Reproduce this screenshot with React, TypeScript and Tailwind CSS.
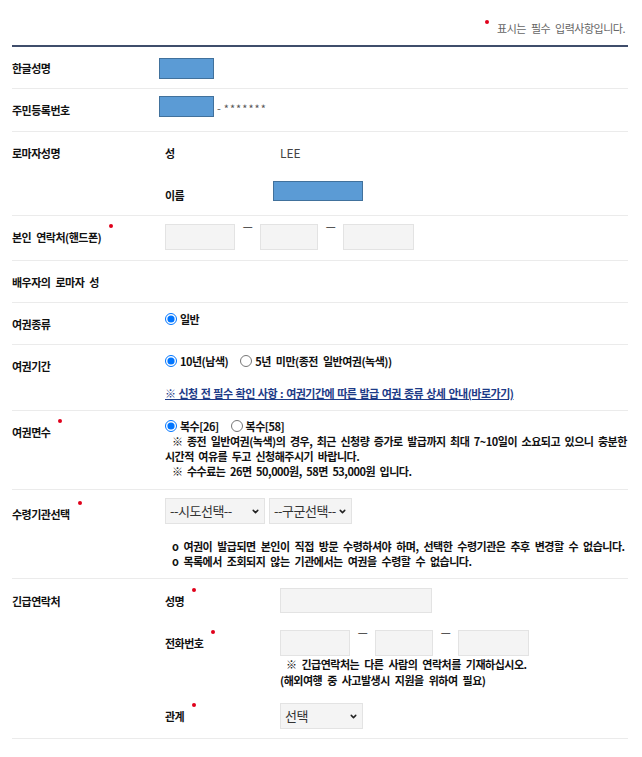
import { ChevronDown } from "lucide-react";
import type { ReactNode } from "react";

// small red "required" marker
function Dot({ className = "" }: { className?: string }) {
	return (
		<span
			className={`inline-block w-[4px] h-[4px] rounded-full bg-[#e0001b] align-top relative ${className}`}
		/>
	);
}

function Label({
	children,
	required,
	className = "pt-[13px]",
}: {
	children: ReactNode;
	required?: boolean;
	className?: string;
}) {
	return (
		<div className={`w-[153px] shrink-0 leading-[16px] font-bold ${className}`}>
			{children}
			{required && <Dot className="ml-[8px] -top-[5px]" />}
		</div>
	);
}

function Box({ className }: { className: string }) {
	return <div className={`bg-[#f4f4f4] border border-[#e3e3e3] ${className}`} />;
}

function Dash() {
	return (
		<span className="w-[25px] shrink-0 text-center leading-[4px] text-[#555] font-bold">—</span>
	);
}

function Select({ className, text }: { className: string; text: string }) {
	return (
		<div className={`relative shrink-0 ${className}`}>
			<select className="appearance-none w-full h-[26px] bg-[#f4f4f4] border border-[#e3e3e3] pl-[4px] text-[13px] font-normal text-[#333] outline-none">
				<option>{text}</option>
			</select>
			<ChevronDown
				className="absolute right-[5px] top-[9px] pointer-events-none text-[#222]"
				size={9}
				strokeWidth={4}
			/>
		</div>
	);
}

function Radio({
	name,
	label,
	checked,
	className = "",
}: {
	name: string;
	label: string;
	checked?: boolean;
	className?: string;
}) {
	return (
		<label className={`flex items-center h-[14px] font-bold leading-[14px] ${className}`}>
			<input
				type="radio"
				name={name}
				defaultChecked={checked}
				className="m-0 w-[12px] h-[12px]"
			/>
			<span className="ml-[3px]">{label}</span>
		</label>
	);
}

const redacted = "bg-[#5b9bd5] border border-[#41719c]";

export default function App() {
	return (
		<div className="w-[642px] min-h-[757px] bg-white font-['Noto_Sans_CJK_KR','Noto_Sans',sans-serif] text-[11px] tracking-[-0.5px] [word-spacing:3px] text-[#111]">
			<div className="ml-[12px] w-[616px]">
				{/* header note */}
				<div className="h-[45px] flex justify-end items-start pt-[20px] pr-[3px] leading-[16px] text-[#666]">
					<Dot className="mr-[8px] top-0" />
					<span>표시는 필수 입력사항입니다.</span>
				</div>
				<div className="border-t-2 border-[#3f4d6b]" />

				{/* 한글성명 */}
				<div className="flex h-[42px] border-b border-[#ebebeb]">
					<Label>한글성명</Label>
					<div className="pt-[11px] -ml-[6px]">
						<div className={`w-[55px] h-[21px] ${redacted}`} />
					</div>
				</div>

				{/* 주민등록번호 */}
				<div className="flex h-[43px] border-b border-[#ebebeb]">
					<Label>주민등록번호</Label>
					<div className="pt-[7px] -ml-[6px] flex items-start">
						<div className={`w-[55px] h-[21px] ${redacted}`} />
						<span className="ml-[3px] mt-[4px] leading-[16px] font-normal text-[#555] tracking-normal [word-spacing:0px]">
							-<span className="ml-[3px] tracking-[1px]">*******</span>
						</span>
					</div>
				</div>

				{/* 로마자성명 */}
				<div className="flex h-[84px] border-b border-[#ebebeb]">
					<Label>로마자성명</Label>
					<div className="flex flex-col">
						<div className="flex h-[42px]">
							<div className="w-[115px] pt-[13px] leading-[16px] font-bold">성</div>
							<div className="pt-[13px] leading-[16px] text-[12px] text-[#444] tracking-normal">
								LEE
							</div>
						</div>
						<div className="flex">
							<div className="w-[115px] pt-[13px] leading-[16px] font-bold">이름</div>
							<div className={`mt-[7px] -ml-[7px] w-[90px] h-[20px] ${redacted}`} />
						</div>
					</div>
				</div>

				{/* 본인 연락처 */}
				<div className="flex h-[45px] border-b border-[#ebebeb]">
					<Label required>본인 연락처(핸드폰)</Label>
					<div className="pt-[8px] flex items-start">
						<Box className="w-[70px] h-[26px]" />
						<Dash />
						<Box className="w-[58px] h-[26px]" />
						<Dash />
						<Box className="w-[71px] h-[26px]" />
					</div>
				</div>

				{/* 배우자의 로마자 성 */}
				<div className="flex h-[42px] border-b border-[#ebebeb]">
					<Label>배우자의 로마자 성</Label>
				</div>

				{/* 여권종류 */}
				<div className="flex h-[42px] border-b border-[#ebebeb]">
					<Label>여권종류</Label>
					<div className="pt-[9px]">
						<Radio name="type" label="일반" checked />
					</div>
				</div>

				{/* 여권기간 */}
				<div className="flex h-[66px] border-b border-[#ebebeb]">
					<Label>여권기간</Label>
					<div className="pt-[9px] flex flex-col">
						<div className="flex">
							<Radio name="period" label="10년(남색)" checked />
							<Radio name="period" label="5년 미만(종전 일반여권(녹색))" className="ml-[12px]" />
						</div>
						<a className="mt-[17px] leading-[16px] font-bold text-[#1d3b87] underline [word-spacing:1px]">
							※ 신청 전 필수 확인 사항 : 여권기간에 따른 발급 여권 종류 상세 안내(바로가기)
						</a>
					</div>
				</div>

				{/* 여권면수 */}
				<div className="flex h-[79px] border-b border-[#ebebeb]">
					<Label required>여권면수</Label>
					<div className="pt-[8px] flex flex-col">
						<div className="flex">
							<Radio name="pages" label="복수[26]" checked />
							<Radio name="pages" label="복수[58]" className="ml-[12px]" />
						</div>
						<p className="mt-[1px] leading-[15px] font-bold whitespace-nowrap [word-spacing:2.5px]">
							<span className="pl-[7px]">※ 종전 일반여권(녹색)의 경우, 최근 신청량 증가로 발급까지 최대 7~10일이 소요되고 있으니 충분한</span>
							<br />
							시간적 여유를 두고 신청해주시기 바랍니다.
							<br />
							<span className="pl-[7px]">※ 수수료는 26면 50,000원, 58면 53,000원 입니다.</span>
						</p>
					</div>
				</div>

				{/* 수령기관선택 */}
				<div className="flex h-[89px] border-b border-[#ebebeb]">
					<Label required className="pt-[16px]">
						수령기관선택
					</Label>
					<div className="pt-[8px] flex flex-col">
						<div className="flex gap-[4px]">
							<Select className="w-[100px]" text="--시도선택--" />
							<Select className="w-[83px]" text="--구군선택--" />
						</div>
						<div className="mt-[15px] pl-[7px] leading-[15px] font-bold whitespace-nowrap">
							<p>o 여권이 발급되면 본인이 직접 방문 수령하셔야 하며, 선택한 수령기관은 추후 변경할 수 없습니다.</p>
							<p>o 목록에서 조회되지 않는 기관에서는 여권을 수령할 수 없습니다.</p>
						</div>
					</div>
				</div>

				{/* 긴급연락처 */}
				<div className="flex h-[160px] border-b border-[#ebebeb]">
					<Label className="pt-[14px]">긴급연락처</Label>
					<div className="flex flex-col">
						<div className="flex h-[42px]">
							<div className="w-[115px] pt-[14px] leading-[16px] font-bold">
								성명
								<Dot className="ml-[8px] -top-[5px]" />
							</div>
							<Box className="mt-[9px] w-[152px] h-[25px]" />
						</div>
						<div className="flex">
							<div className="w-[115px] pt-[14px] leading-[16px] font-bold">
								전화번호
								<Dot className="ml-[8px] -top-[5px]" />
							</div>
							<div className="mt-[9px] flex flex-col">
								<div className="flex items-start">
									<Box className="w-[70px] h-[26px]" />
									<Dash />
									<Box className="w-[58px] h-[26px]" />
									<Dash />
									<Box className="w-[71px] h-[26px]" />
								</div>
								<div className="leading-[16px] font-bold whitespace-nowrap">
									<p className="pl-[6px]">※ 긴급연락처는 다른 사람의 연락처를 기재하십시오.</p>
									<p>(해외여행 중 사고발생시 지원을 위하여 필요)</p>
								</div>
							</div>
						</div>
						<div className="flex mt-[15px]">
							<div className="w-[115px] pt-[5px] leading-[16px] font-bold">
								관계
								<Dot className="ml-[8px] -top-[5px]" />
							</div>
							<Select className="w-[83px]" text="선택" />
						</div>
					</div>
				</div>
			</div>
		</div>
	);
}
